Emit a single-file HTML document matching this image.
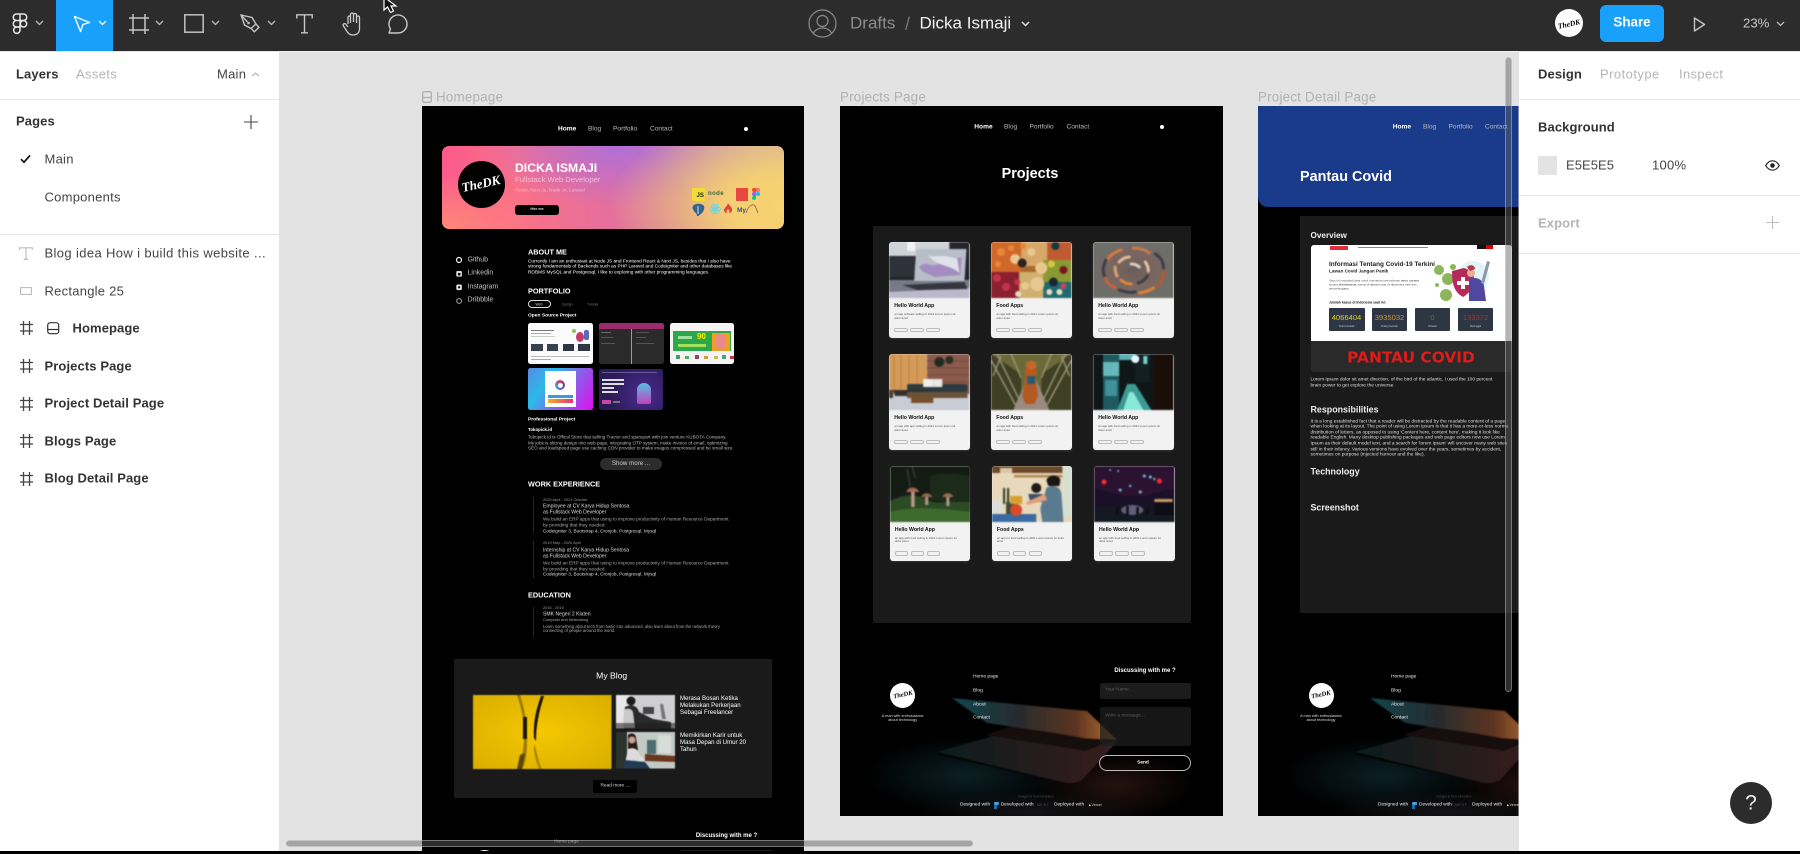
<!DOCTYPE html>
<html lang="en"><head><meta charset="utf-8"><title>Dicka Ismaji – Figma</title>
<style>
*{box-sizing:border-box}
html,body{margin:0;padding:0;width:1800px;height:854px;overflow:hidden;background:#000}
body{position:relative;font-family:"Liberation Sans",sans-serif}
.a{position:absolute}
.t{position:absolute;white-space:nowrap;line-height:1;transform:translateY(-50%)}
.b{font-weight:700}
.c{transform:translate(-50%,-50%)}
.f{position:absolute;left:0;top:0;width:1800px;height:854px;filter:blur(.3px)}
.f .t{margin-top:.8px}
.ft{margin-top:1.8px !important}
.ui{font-size:13px;color:#444;letter-spacing:.25px}
.ui.b{color:#333;letter-spacing:.1px}
svg{position:absolute;overflow:visible}
.w{color:#fff}
.card{position:absolute;width:80.5px;height:95.5px;background:#f2f2f2;border-radius:3px;overflow:hidden;box-shadow:0 1px 2px rgba(255,255,255,.12)}
.card svg{left:0;top:0;width:80.5px;height:56px;filter:blur(.7px)}
.card .h{position:absolute;left:5px;top:61.9px;font-size:5.2px;font-weight:700;color:#111;white-space:nowrap;line-height:1}
.card .d{position:absolute;left:5px;top:71px;font-size:2.9px;color:#555;line-height:3.5px;width:68px}
.card i{position:absolute;top:85.5px;width:13.5px;height:4.5px;border:.5px solid #bbb;border-radius:2px}
.nav span{position:absolute;font-size:6.6px;line-height:1;transform:translateY(-50%);margin-top:.8px;color:#bbb;white-space:nowrap}
.nav span.h{color:#fff;font-weight:700}
</style></head><body>

<!-- canvas -->
<div class="a" style="left:279px;top:52px;width:1240px;height:800px;background:#e3e3e3"></div>

<!-- frame labels -->
<svg style="left:422px;top:91px" width="10" height="12" viewBox="0 0 10 12"><rect x=".7" y=".7" width="8.6" height="10.6" rx="1.5" fill="none" stroke="#b0b0b0" stroke-width="1.3"/><path d="M1 6.5h8" stroke="#b0b0b0" stroke-width="1.3"/></svg>
<div class="t" style="left:436px;top:96.5px;font-size:13.4px;color:#b2b2b2;letter-spacing:.2px">Homepage</div>
<div class="t" style="left:840px;top:96.5px;font-size:13.4px;color:#b2b2b2;letter-spacing:.2px">Projects Page</div>
<div class="t" style="left:1258px;top:96.5px;font-size:13.4px;color:#b2b2b2;letter-spacing:.2px">Project Detail Page</div>

<!-- HOMEPAGE FRAME -->
<div class="f" style="clip-path:polygon(422px 105.5px,804px 105.5px,804px 852px,422px 852px)">
<div class="a" style="left:422px;top:105.5px;width:382px;height:750px;background:#000"></div>
<div class="nav">
<span class="h" style="left:558px;top:129px">Home</span><span style="left:588px;top:129px">Blog</span><span style="left:613px;top:129px">Portfolio</span><span style="left:650px;top:129px">Contact</span></div>
<div class="a" style="left:743.5px;top:126.5px;width:4px;height:4px;border-radius:50%;background:#fff"></div>

<!-- hero -->
<div class="a" style="left:442.3px;top:146px;width:342px;height:83px;border-radius:7px;background:
radial-gradient(ellipse 175px 95px at 100% 72%,#f7d26e 0%,#f5cf75 32%,rgba(245,207,117,0) 100%),
radial-gradient(ellipse 140px 62px at 52% 0%,#b06fd8 0%,rgba(176,111,216,0) 100%),
radial-gradient(ellipse 110px 60px at 92% 0%,#c8a8a8 0%,rgba(200,168,168,0) 100%),
radial-gradient(ellipse 100px 55px at 0% 100%,#ff8a78 0%,rgba(255,138,120,0) 100%),
linear-gradient(90deg,#fb5a8c 0%,#fa7088 22%,#e56f9e 50%,#d0789f 70%,#d89a90 100%)"></div>
<div class="a" style="left:457.5px;top:160.5px;width:47px;height:47px;border-radius:50%;background:#000"></div>
<div class="t w" style="left:481px;top:183.5px;font:italic 700 13px 'Liberation Serif',serif;transform:translate(-50%,-50%) rotate(-12deg)">TheDK</div>
<div class="t b w" style="left:515px;top:167.5px;font-size:12.2px">DICKA ISMAJI</div>
<div class="t" style="left:515px;top:179.5px;font-size:7.7px;color:rgba(255,255,255,.55)">Fullstack Web Developer</div>
<div class="t" style="left:515px;top:191.5px;font-size:4.8px;color:rgba(255,255,255,.5)">React, Next Js, Node Js, Laravel</div>
<div class="a" style="left:515px;top:205px;width:44px;height:10px;background:#000;border-radius:3px"></div>
<div class="t c" style="left:537px;top:209.5px;font-size:3.6px;color:#ddd;font-weight:700">Hire me</div>
<div class="a" style="left:691.5px;top:188px;width:13px;height:12.5px;background:#f1dc3c"></div>
<div class="t b" style="left:696.5px;top:195px;font-size:6px;color:#222">JS</div>
<div class="t b" style="left:708px;top:193.5px;font-size:6px;color:#3c6b3c;letter-spacing:.4px">node</div>
<div class="a" style="left:736px;top:188px;width:12px;height:12.5px;background:#e9483f"></div>
<svg style="left:752px;top:188px" width="8" height="12" viewBox="0 0 8 12"><circle cx="6" cy="6" r="2" fill="#1abcfe"/><path d="M2 0h2v4H2a2 2 0 010-4z" fill="#f24e1e"/><path d="M4 0h2a2 2 0 010 4H4z" fill="#ff7262"/><path d="M2 4h2v4H2a2 2 0 010-4z" fill="#a259ff"/><path d="M2 8h2v2a2 2 0 11-2-2z" fill="#0acf83"/></svg>
<svg style="left:692px;top:203px" width="13" height="13" viewBox="0 0 13 13"><path d="M1 3c2-3 9-3 11 0 1 3-1 6-2 7l-1 1c-2 1-2 1-2 2H5c0-3-2-3-3-5S0 5 1 3z" fill="#33668f"/><path d="M6 3v8" stroke="#cfe0ee" stroke-width="1"/></svg>
<svg style="left:709px;top:203px" width="12" height="12" viewBox="0 0 12 12" fill="none" stroke="#6fd6e0" stroke-width=".9"><ellipse cx="6" cy="6" rx="5.5" ry="2.2"/><ellipse cx="6" cy="6" rx="5.5" ry="2.2" transform="rotate(60 6 6)"/><ellipse cx="6" cy="6" rx="5.5" ry="2.2" transform="rotate(120 6 6)"/><circle cx="6" cy="6" r="1.1" fill="#6fd6e0"/></svg>
<svg style="left:723px;top:203px" width="10" height="12" viewBox="0 0 10 12"><path d="M5 0c1 3 5 4 4 8-1 2-3 2-3 2 1-2 0-3-1-4-1 1-2 2-1 4 0 0-3 0-3-3C1 5 4 4 5 0z" fill="#e0453a"/></svg>
<div class="t b" style="left:737px;top:210px;font-size:6.5px;color:#33557a">My</div>
<svg style="left:745px;top:203px" width="14" height="12" viewBox="0 0 14 12"><path d="M1 10C3 4 6 1 9 2c2 1 2 4 4 8" fill="none" stroke="#7a6a50" stroke-width=".8"/></svg>

<!-- sidebar -->
<svg style="left:456px;top:256.5px" width="7" height="50" viewBox="0 0 7 50"><circle cx="3" cy="3" r="2.5" fill="none" stroke="#eee" stroke-width="1.2"/><rect x=".3" y="14" width="5.6" height="5.6" rx="1" fill="#ddd"/><rect x="2" y="16" width="2.4" height="2.4" fill="#000"/><rect x=".3" y="27.5" width="5.6" height="5.6" rx="1.3" fill="#ddd"/><circle cx="3.1" cy="30.3" r="1.1" fill="#000"/><circle cx="3.1" cy="44" r="2.4" fill="none" stroke="#aaa" stroke-width="1"/></svg>
<div class="t" style="left:467.6px;top:259.8px;font-size:6.9px;color:#c4c4c4">Github</div>
<div class="t" style="left:467.6px;top:273.5px;font-size:6.9px;color:#c4c4c4">Linkedin</div>
<div class="t" style="left:467.6px;top:287px;font-size:6.9px;color:#c4c4c4">Instagram</div>
<div class="t" style="left:467.6px;top:300.6px;font-size:6.9px;color:#c4c4c4">Dribbble</div>

<!-- about -->
<div class="t b w" style="left:528px;top:251px;font-size:7.3px">ABOUT ME</div>
<div class="t w" style="left:528px;top:262px;font-size:4.75px">Currently I am an enthusiast at Node JS and Frontend React &amp; Next JS, besides that I also have</div>
<div class="t w" style="left:528px;top:267.5px;font-size:4.75px">strong fundamentals of Backends such as PHP Laravel and Codeigniter and other databases like</div>
<div class="t w" style="left:528px;top:273px;font-size:4.75px">RDBMS MySQL and Postgresql. I like to exploring with other programming languages.</div>
<div class="t b w" style="left:528px;top:290.5px;font-size:7.3px">PORTFOLIO</div>
<div class="a" style="left:527.5px;top:300px;width:23.5px;height:8px;border:.7px solid #ddd;border-radius:4px"></div>
<div class="t c" style="left:539px;top:304px;font-size:3.4px;color:#ddd">Web</div>
<div class="t" style="left:562px;top:304px;font-size:3.4px;color:#777">Design</div>
<div class="t" style="left:587px;top:304px;font-size:3.4px;color:#777">Tutorial</div>
<div class="t b w" style="left:528px;top:316.5px;font-size:4.9px">Open Source Project</div>

<!-- thumbs -->
<div class="a" style="left:528px;top:322.5px;width:65px;height:41.5px;background:#fbfbfb;border-radius:2.5px;overflow:hidden">
 <div class="a" style="left:3px;top:7px;width:23px;height:1.6px;background:#777"></div><div class="a" style="left:3px;top:10px;width:20px;height:1.4px;background:#aaa"></div><div class="a" style="left:3px;top:13px;width:24px;height:1px;background:#ccc"></div>
 <div class="a" style="left:44px;top:6px;width:4px;height:4px;border-radius:50%;background:#8ec05a"></div><div class="a" style="left:48px;top:9px;width:8px;height:10px;border-radius:50%;background:#c83a6c"></div><div class="a" style="left:56px;top:7px;width:5px;height:10px;background:#5a6ab8;border-radius:2px"></div>
 <div class="a" style="left:3px;top:21px;width:12px;height:7px;background:#38424e"></div><div class="a" style="left:18.5px;top:21px;width:11px;height:7px;background:#38424e"></div><div class="a" style="left:35px;top:21px;width:11px;height:7px;background:#2d3642"></div><div class="a" style="left:50px;top:21px;width:12px;height:7px;background:#2d3642"></div>
 <div class="a" style="left:3px;top:33px;width:58px;height:.8px;background:#bbb"></div><div class="a" style="left:3px;top:36px;width:20px;height:.8px;background:#aaa"></div>
</div>
<div class="a" style="left:598.5px;top:322.5px;width:65px;height:41.5px;background:#2a2a2a;border-radius:2.5px;overflow:hidden">
 <div class="a" style="left:0;top:0;width:65px;height:6.5px;background:#9d2c6f"></div>
 <div class="a" style="left:32px;top:6px;width:1px;height:36px;background:#9a9a9a"></div>
 <div class="a" style="left:2px;top:9px;width:10px;height:.8px;background:#666"></div><div class="a" style="left:2px;top:14px;width:12px;height:.8px;background:#555"></div><div class="a" style="left:2px;top:20px;width:14px;height:.8px;background:#555"></div>
 <div class="a" style="left:37px;top:9px;width:13px;height:.8px;background:#555"></div><div class="a" style="left:37px;top:14px;width:10px;height:.8px;background:#555"></div><div class="a" style="left:37px;top:20px;width:18px;height:.8px;background:#555"></div>
</div>
<div class="a" style="left:670px;top:322.5px;width:64px;height:41.5px;background:#f4f4f4;border-radius:2.5px;overflow:hidden">
 <div class="a" style="left:3px;top:8.5px;width:58px;height:20px;background:#2aa84a"></div>
 <div class="a" style="left:42px;top:10px;width:18px;height:18px;background:#f0a020"></div>
 <div class="a" style="left:46px;top:11px;width:9px;height:15px;background:#e88a8a;border-radius:3px"></div>
 <div class="t b" style="left:27px;font-size:8px;color:#fff000;transform:none;top:10.5px;margin-top:0">90</div>
 <div class="a" style="left:8px;top:13px;width:14px;height:3px;background:#9ee0a0"></div>
 <div class="a" style="left:8px;top:21px;width:28px;height:3px;background:#a4e060"></div>
 <div class="a" style="left:6px;top:32px;width:4px;height:4px;background:#4a9a6a"></div><div class="a" style="left:15px;top:33px;width:4px;height:3px;background:#5aaa5a"></div><div class="a" style="left:25px;top:32px;width:4px;height:4px;background:#a04060"></div><div class="a" style="left:34px;top:33px;width:4px;height:3px;background:#d0a040"></div><div class="a" style="left:44px;top:33px;width:4px;height:3px;background:#c0c060"></div><div class="a" style="left:52px;top:32px;width:4px;height:4px;background:#50a080"></div><div class="a" style="left:60px;top:33px;width:4px;height:3px;background:#d03050"></div>
</div>
<div class="a" style="left:528px;top:368.3px;width:64.5px;height:41.4px;border-radius:2.5px;overflow:hidden;background:linear-gradient(125deg,#5a8ae8 0%,#2bbae8 30%,#8a5ee8 60%,#e010f0 100%)">
 <div class="a" style="left:16.5px;top:3px;width:31.5px;height:36px;background:#fff"></div>
 <div class="a" style="left:27px;top:12px;width:10px;height:10px;border-radius:50%;background:conic-gradient(#d04060,#5040c0,#40a0e0,#d04060)"></div>
 <div class="a" style="left:29.5px;top:14.5px;width:5px;height:5px;border-radius:50%;background:#fff"></div>
 <div class="a" style="left:20px;top:27px;width:24.5px;height:3px;background:#3a9ae0"></div>
 <div class="a" style="left:20px;top:31px;width:24.5px;height:3.5px;background:linear-gradient(90deg,#f0b020,#e83080)"></div>
</div>
<div class="a" style="left:599px;top:369px;width:64px;height:40.5px;border-radius:2.5px;overflow:hidden;background:radial-gradient(circle at 45px 25px,#4a2a90,#2a1a55 70%)">
 <div class="a" style="left:3px;top:10px;width:22px;height:1.6px;background:#ddd"></div><div class="a" style="left:3px;top:14px;width:22px;height:1.6px;background:#ddd"></div><div class="a" style="left:3px;top:18px;width:12px;height:1.6px;background:#ddd"></div><div class="a" style="left:3px;top:22px;width:16px;height:1.6px;background:#ddd"></div>
 <div class="a" style="left:3px;top:31px;width:9px;height:4px;background:#c848a8"></div><div class="a" style="left:14px;top:32px;width:7px;height:2px;background:#777"></div>
 <div class="a" style="left:38px;top:14px;width:14px;height:21px;background:linear-gradient(#5ac0e0,#c040c0);border-radius:7px 7px 2px 2px"></div>
 <div class="a" style="left:3px;top:2.5px;width:55px;height:1px;background:#6a5a9a"></div>
</div>

<div class="t b w" style="left:528px;top:420.7px;font-size:4.9px">Professional Project</div>
<div class="t b w" style="left:528px;top:429.5px;font-size:4.4px">Tokopick.id</div>
<div class="t" style="left:528px;top:437.5px;font-size:4.6px;color:#bbb">Tokopick.Id is Offical Store that selling Tractor and sparepart with join venture KUBOTA Company.</div>
<div class="t" style="left:528px;top:443px;font-size:4.6px;color:#bbb">My jobs is slicing design into web page, integrating OTP system, make invoice of email, optimizing</div>
<div class="t" style="left:528px;top:448.7px;font-size:4.6px;color:#bbb">SEO and loadspeed page use caching CDN provider to make images compressed and be small size.</div>
<div class="a" style="left:600px;top:457.5px;width:62px;height:12px;background:#2c2c2c;border-radius:6px"></div>
<div class="t c" style="left:631px;top:463px;font-size:6.2px;color:#ccc">Show more ...</div>

<div class="t b w" style="left:528px;top:483.2px;font-size:7.3px">WORK EXPERIENCE</div>
<div class="a" style="left:532.5px;top:497px;width:1px;height:36px;background:#5c1015"></div>
<div class="a" style="left:532.5px;top:541px;width:1px;height:37px;background:#5c1015"></div>
<div class="t" style="left:543px;top:499px;font-size:3.9px;color:#999">2020 April - 2021 October</div>
<div class="t" style="left:543px;top:506.3px;font-size:5.1px;color:#ddd">Employee at CV Karya Hidup Sentosa</div>
<div class="t" style="left:543px;top:512.7px;font-size:5.1px;color:#ddd">as Fullstack Web Developer</div>
<div class="t" style="left:543px;top:519.7px;font-size:4.7px;color:#aaa">We build an ERP apps  that using to improve productivity of Human Resource Department</div>
<div class="t" style="left:543px;top:525.3px;font-size:4.7px;color:#aaa">by providing that they needed.</div>
<div class="t" style="left:543px;top:531px;font-size:4.7px;color:#ddd">Codeigniter 3, Bootstrap 4, Cronjob, Postgresql, Mysql</div>
<div class="t" style="left:543px;top:542.7px;font-size:3.9px;color:#999">2019 May - 2020 April</div>
<div class="t" style="left:543px;top:550px;font-size:5.1px;color:#ddd">Internship at CV Karya Hidup Sentosa</div>
<div class="t" style="left:543px;top:556.3px;font-size:5.1px;color:#ddd">as Fullstack Web Developer</div>
<div class="t" style="left:543px;top:563px;font-size:4.7px;color:#aaa">We build an ERP apps  that using to improve productivity of Human Resource Department</div>
<div class="t" style="left:543px;top:569px;font-size:4.7px;color:#aaa">by providing that they needed.</div>
<div class="t" style="left:543px;top:574.7px;font-size:4.7px;color:#ddd">Codeigniter 3, Bootstrap 4, Cronjob, Postgresql, Mysql</div>

<div class="t b w" style="left:528px;top:594.2px;font-size:7.3px">EDUCATION</div>
<div class="a" style="left:532.5px;top:607px;width:1px;height:30px;background:#5c1015"></div>
<div class="t" style="left:543px;top:607.7px;font-size:3.9px;color:#999">2016 - 2019</div>
<div class="t" style="left:543px;top:614px;font-size:5.1px;color:#ddd">SMK Negeri 2 Klaten</div>
<div class="t" style="left:543px;top:619px;font-size:3.9px;color:#aaa">Computer and Networking</div>
<div class="t" style="left:543px;top:626px;font-size:4.2px;color:#aaa">Learn something about tech from basic into advanced, also learn about  from the network theory</div>
<div class="t" style="left:543px;top:630.7px;font-size:4.2px;color:#aaa">connecting of people around the world.</div>

<!-- blog -->
<div class="a" style="left:454.3px;top:658.7px;width:317.4px;height:139.3px;background:#1a1a1a;border-radius:1px"></div>
<div class="t c w" style="left:611.7px;top:675px;font-size:8.6px">My Blog</div>
<svg style="left:472.5px;top:695px;filter:blur(.4px)" width="138.5" height="74" viewBox="0 0 138.5 74"><defs><radialGradient id="y" cx=".5" cy=".5" r=".7"><stop offset="0" stop-color="#f5c800"/><stop offset="1" stop-color="#d9ae00"/></radialGradient></defs><rect width="138.5" height="74" fill="url(#y)"/><path d="M44 0c5 14 8 30 7 46-1 12-3 22-6 28h4c5-8 5-20 5-32 0-16-3-30-7-42z" fill="#9a7a00"/><path d="M50 22l4 0 0 22-4 0z" fill="#1a1405"/><path d="M68 1c-5 14-8 26-7 42l2 3c0-15 3-30 8-45z" fill="#1a1405"/><path d="M47 60l5-2-3 16h-5z" fill="#5a4500"/><path d="M62 50c2 8 3 16 7 24h-3c-3-8-5-14-5-22z" fill="#a88600"/></svg>
<svg style="left:616px;top:694.7px;filter:blur(.5px)" width="59" height="33.5" viewBox="0 0 59 33.5"><rect width="59" height="33.5" fill="#cfcfd2"/><rect x="0" y="0" width="14" height="33.5" fill="#e8e8e8"/><circle cx="15" cy="6" r="4.5" fill="#1c1c1c"/><path d="M9 12c6-3 12-2 14 5l14 7 18 3v6.5H8z" fill="#2a2a2a"/><path d="M8 15c3-2 7-2 9 2l2 16H7z" fill="#c8c8c8"/><rect x="27" y="12" width="11" height="7" fill="#454548"/><path d="M44 9l3 0 3 15-4 0z" fill="#777"/><path d="M0 28h59v5.5H0z" fill="#1b1b1b" opacity=".55"/></svg>
<svg style="left:616px;top:732px;filter:blur(.5px)" width="59" height="36.5" viewBox="0 0 59 36.5"><rect width="59" height="36.5" fill="#c3c9c4"/><rect x="0" y="0" width="11" height="36.5" fill="#2a332e"/><rect x="31" y="8" width="9" height="14" fill="#4d6e70"/><rect x="42" y="3" width="13" height="18" fill="#d8dcd8"/><path d="M29 22l30 2v6l-30-1z" fill="#6a3620"/><path d="M12 3c4-3 8-1 8 3l2 12c-3 4-7 4-10 0z" fill="#2a1b18"/><circle cx="16" cy="8" r="3.5" fill="#caa08a"/><path d="M12 17c6-2 10 0 12 6l5 5 -4 2-8-3-5 9H8z" fill="#dcdcda"/><path d="M9 28l20 2 5 6.5H8z" fill="#223a52"/></svg>
<div class="t w" style="left:680px;top:698.5px;font-size:6.1px">Merasa Bosan Ketika</div>
<div class="t w" style="left:680px;top:705.5px;font-size:6.1px">Melakukan Perkerjaan</div>
<div class="t w" style="left:680px;top:712.5px;font-size:6.1px">Sebagai Freelancer</div>
<div class="t w" style="left:680px;top:735.5px;font-size:6.1px">Memikirkan Karir untuk</div>
<div class="t w" style="left:680px;top:742.5px;font-size:6.1px">Masa Depan di Umur 20</div>
<div class="t w" style="left:680px;top:749.5px;font-size:6.1px">Tahun</div>
<div class="a" style="left:592.7px;top:780px;width:44.3px;height:13px;background:#000;border-radius:2px"></div>
<div class="t c" style="left:615px;top:786px;font-size:4.8px;color:#ddd">Read more ...</div>

<!-- footer piece -->
<div class="t c b w" style="left:726.5px;top:835.5px;font-size:6px">Discussing with me ?</div>
<div class="t" style="left:554px;top:842.5px;font-size:4.8px;color:#ccc">Home page</div>
<div class="a" style="left:472px;top:849.5px;width:25px;height:25px;border-radius:50%;background:#fff"></div>
<div class="a" style="left:681px;top:849.5px;width:91px;height:16px;background:#1c1c1c"></div>
</div>

<!-- PROJECTS FRAME -->
<div class="f" style="clip-path:polygon(840px 105.5px,1223px 105.5px,1223px 816px,840px 816px)">
<div class="a" style="left:840px;top:105.5px;width:383px;height:711px;background:#000"></div>
<div class="nav"><span class="h" style="left:974.3px;top:127.5px">Home</span><span style="left:1004px;top:127.5px">Blog</span><span style="left:1029.5px;top:127.5px">Portfolio</span><span style="left:1066.5px;top:127.5px">Contact</span></div>
<div class="a" style="left:1160px;top:125px;width:4px;height:4px;border-radius:50%;background:#fff"></div>
<div class="t c b w" style="left:1030px;top:173px;font-size:14.4px">Projects</div>
<div class="a" style="left:872.7px;top:225.7px;width:318px;height:397px;background:#1a1a1a;border-radius:1px"></div>

<!-- cards -->
<div class="card" style="left:889.3px;top:242.3px"><svg viewBox="0 0 80 56" preserveAspectRatio="none"><rect width="80" height="56" fill="#23242c"/><rect x="0" y="0" width="60" height="14" fill="#cfd2d6"/><rect x="18" y="0" width="8" height="9" fill="#f2f2f4"/><rect x="0" y="15" width="26" height="20" fill="#2f3138"/><path d="M0 38h80v18H0z" fill="#777a88"/><path d="M0 50l80-4v10H0z" fill="#bcb8cc"/><path d="M27 7l50 0-2 32H25z" fill="#b8bec8"/><path d="M30 25c8-8 14 4 22-6 6-6 12 0 20-4l-1 18-26 2c-6-4-10-2-15-10z" fill="#a58cc0"/><path d="M38 13c10 4 12-2 30 4l2 14c-12-10-18-4-32-18z" fill="#dfe3e8"/><path d="M13 43l62-3 3 7-50 1z" fill="#33353c"/></svg><div class="h">Hello World App</div><div class="d">an app software selling in 2021 Lorem ipsum sit dolor amet</div><i style="left:5px"></i><i style="left:21px"></i><i style="left:37px"></i></div>

<div class="card" style="left:991.3px;top:242.3px"><svg viewBox="0 0 80 56" preserveAspectRatio="none"><rect width="80" height="56" fill="#a96a30"/><rect x="0" y="0" width="30" height="30" fill="#d0682a"/><rect x="30" y="0" width="26" height="24" fill="#d8a868"/><rect x="56" y="0" width="24" height="18" fill="#c05a30"/><rect x="0" y="30" width="28" height="26" fill="#8a2030"/><rect x="28" y="30" width="24" height="26" fill="#d0b070"/><rect x="52" y="18" width="28" height="22" fill="#8a9a30"/><rect x="52" y="40" width="28" height="16" fill="#1f6a70"/><g fill="#e8883a"><circle cx="10" cy="10" r="4"/><circle cx="20" cy="6" r="3"/><circle cx="7" cy="22" r="3"/><circle cx="32" cy="4" r="3"/></g><g fill="#e8c890"><circle cx="40" cy="10" r="4"/><circle cx="24" cy="17" r="5"/><circle cx="50" cy="26" r="6"/><circle cx="46" cy="42" r="7"/><circle cx="34" cy="44" r="4"/></g><circle cx="31" cy="21" r="4.5" fill="#2a2420"/><circle cx="64" cy="4" r="4" fill="#123a40"/><circle cx="72" cy="28" r="4" fill="#7a1525"/><circle cx="62" cy="40" r="4.5" fill="#1c2430"/><g fill="#c0344a"><circle cx="6" cy="36" r="4"/><circle cx="15" cy="45" r="4"/><circle cx="26" cy="40" r="3"/></g><g fill="#e8dcc0"><circle cx="68" cy="50" r="3"/><circle cx="27" cy="52" r="3"/><circle cx="58" cy="50" r="3"/></g><circle cx="72" cy="44" r="3" fill="#d04060"/><circle cx="60" cy="22" r="3.5" fill="#d8c840"/></svg><div class="h">Food Apps</div><div class="d">an app with food selling in 2021 Lorem ipsum sit dolor amet</div><i style="left:5px"></i><i style="left:21px"></i><i style="left:37px"></i></div>

<div class="card" style="left:1093.3px;top:242.3px"><svg viewBox="0 0 80 56" preserveAspectRatio="none"><defs><radialGradient id="sw"><stop offset="0" stop-color="#6a5e58"/><stop offset=".6" stop-color="#7a6660"/><stop offset="1" stop-color="#6d6d6a"/></radialGradient></defs><rect width="80" height="56" fill="url(#sw)"/><g fill="none" stroke-width="3" stroke-linecap="round"><path d="M14 18c4-6 8-8 14-10" stroke="#d87a3a"/><path d="M12 36c-3-8-2-12 1-18" stroke="#3a3f48"/><path d="M22 46c-5-3-8-5-10-10" stroke="#c0663a"/><path d="M42 50c-6 1-10 0-16-2" stroke="#3a3f48"/><path d="M60 46c-4 3-8 4-14 5" stroke="#e08030"/><path d="M70 30c0 6-2 10-6 14" stroke="#b05a30"/><path d="M62 12c5 3 8 8 8 14" stroke="#3a3f48"/><path d="M40 6c6 0 12 2 16 5" stroke="#c87a4a"/><path d="M26 20c3-3 6-5 10-5" stroke="#e8b890"/><path d="M24 34c-2-3-2-6-2-9" stroke="#d8a070"/><path d="M38 42c-4 0-7-1-10-4" stroke="#e08a3a"/><path d="M54 34c-2 3-5 6-9 7" stroke="#3a3f48"/><path d="M52 20c2 3 3 6 3 9" stroke="#e8c0a0"/><path d="M38 22c3 0 6 1 8 3" stroke="#d8d0c8"/></g></svg><div class="h">Hello World App</div><div class="d">an app with food selling in 2021 Lorem ipsum sit dolor amet</div><i style="left:5px"></i><i style="left:21px"></i><i style="left:37px"></i></div>

<div class="card" style="left:889.3px;top:354px"><svg viewBox="0 0 80 56" preserveAspectRatio="none"><rect width="80" height="56" fill="#c8ccd4"/><rect width="38" height="40" fill="#d49a58"/><path d="M5 0v40M12 0v40M20 0v40M28 0v40" stroke="#b57a3e" stroke-width=".7"/><rect x="38" width="42" height="40" fill="#8a5a4c"/><path d="M38 7h42M38 14h42M38 21h42M38 28h42" stroke="#6d4438" stroke-width=".7"/><circle cx="50" cy="8" r="5" fill="#232a20"/><circle cx="60" cy="6" r="4" fill="#2a3020"/><rect x="18" y="30" width="60" height="8" rx="2" fill="#2c3a40"/><rect x="34" y="25" width="10" height="8" fill="#f0f0ee"/><rect x="44" y="25" width="9" height="8" fill="#e8e8e4"/><path d="M4 36h34l2 6H6z" fill="#33302c"/><path d="M18 38h60v6H18z" fill="#6a5238"/><rect x="22" y="44" width="22" height="5" fill="#7a4e2c"/><rect x="0" y="36" width="4" height="8" fill="#4a3a30"/></svg><div class="h">Hello World App</div><div class="d">an app with app selling in 2021 Lorem ipsum sit dolor amet</div><i style="left:5px"></i><i style="left:21px"></i><i style="left:37px"></i></div>

<div class="card" style="left:991.3px;top:354px"><svg viewBox="0 0 80 56" preserveAspectRatio="none"><rect width="80" height="56" fill="#6a6a38"/><path d="M0 0l30 20v36H0zM80 0L50 20v36h30z" fill="#3e3f24"/><path d="M0 6l26 48M6 0l26 54M80 6L54 54M74 0L48 54M20 0l10 24M60 0L50 24M10 2l-8 20M70 2l8 20" stroke="#9c9878" stroke-width="1.4"/><path d="M22 56l14-32h8l14 32z" fill="#9a8a80"/><path d="M36 24h8l2-16h-12z" fill="#7c7a40"/><path d="M34 12c4-2 8-2 10 0l2 6-2 6 3 18-4 8H34l-3-8 3-18z" fill="#b25a22"/><rect x="36" y="22" width="8" height="8" fill="#2a5a70"/><circle cx="40" cy="11" r="4.5" fill="#c9662a"/></svg><div class="h">Food Apps</div><div class="d">an app with food selling in 2021 Lorem ipsum sit dolor amet</div><i style="left:5px"></i><i style="left:21px"></i><i style="left:37px"></i></div>

<div class="card" style="left:1093.3px;top:354px"><svg viewBox="0 0 80 56" preserveAspectRatio="none"><rect width="80" height="56" fill="#0f1616"/><path d="M10 0h16v56H10z" fill="#1e5a60"/><path d="M10 8h16v14H10z" fill="#67b8bc"/><path d="M12 26h12v16H12z" fill="#3f9098"/><path d="M26 0h30v6H26z" fill="#5fb0b4"/><path d="M24 56l10-26h8l16 26z" fill="#3c9a94"/><path d="M30 56l6-18h4l10 18z" fill="#8ae8d8"/><path d="M42 0h14v28H42z" fill="#122022"/><path d="M60 0h20v56H60z" fill="#1a0f08"/><circle cx="42" cy="5" r="4" fill="#e4fafa"/><rect x="50" y="2" width="4" height="8" fill="#7ad0d0"/></svg><div class="h">Hello World App</div><div class="d">an app with food selling in 2021 Lorem ipsum sit dolor amet</div><i style="left:5px"></i><i style="left:21px"></i><i style="left:37px"></i></div>

<div class="card" style="left:889.9px;top:465.7px"><svg viewBox="0 0 80 56" preserveAspectRatio="none"><rect width="80" height="56" fill="#141a14"/><path d="M0 35c20-10 30-5 40 0s30-4 40-2v23H0z" fill="#2c4a24"/><path d="M40 10c10-4 30-2 40 0v26c-16 0-30 0-40-2z" fill="#1c2a1a"/><path d="M0 46c20-6 50-4 80 0v10H0z" fill="#3e6a2e"/><rect x="21" y="26" width="3.5" height="15" fill="#b89a8a"/><path d="M16 26c3-6 10-6 13 0z" fill="#a86a50"/><rect x="35" y="30" width="3" height="9" fill="#b0988a"/><path d="M31 31c2-5 9-5 11 0z" fill="#9a6248"/><rect x="56" y="30" width="3" height="10" fill="#b0988a"/><path d="M52 31c2-5 9-5 11 0z" fill="#a06a4c"/><path d="M17 3l3 18M22 0l3 12" stroke="#4a4a3e" stroke-width="1"/></svg><div class="h">Hello World App</div><div class="d">an app with food selling in 2021 Lorem ipsum sit dolor amet</div><i style="left:5px"></i><i style="left:21px"></i><i style="left:37px"></i></div>

<div class="card" style="left:991.9px;top:465.7px"><svg viewBox="0 0 80 56" preserveAspectRatio="none"><rect width="80" height="56" fill="#e8d8bc"/><rect width="70" height="7" fill="#6a4a2a"/><rect x="8" y="2" width="12" height="5" fill="#d8c8a8"/><rect x="22" y="9" width="48" height="2.5" fill="#b08a50"/><rect x="70" width="10" height="50" fill="#d8e0d4"/><rect x="0" y="48" width="44" height="8" fill="#3a6aa0"/><rect x="0" y="34" width="10" height="14" fill="#dcdcd8"/><rect x="11" y="22" width="2" height="16" fill="#2a3a20"/><rect x="15" y="22" width="2" height="16" fill="#2a3a20"/><rect x="14" y="36" width="8" height="12" fill="#3a4a3a"/><circle cx="44" cy="22" r="5" fill="#1f1a18"/><path d="M36 28l14 0 3 8H38z" fill="#38506a"/><rect x="18" y="30" width="12" height="8" fill="#d8a030"/><circle cx="24" cy="44" r="6" fill="#d84a2a"/><path d="M54 14c3-6 12-6 14 0l-1 6H56z" fill="#1a1614"/><path d="M54 22c6-4 14-2 15 6l2 28H50l-2-14c2-6 4-12 6-20z" fill="#5a7a90"/><path d="M52 28l-18 8 1 3 20-5z" fill="#e0a078"/></svg><div class="h">Food Apps</div><div class="d">an app for food selling in 2021 Lorem ipsum sit dolor amet</div><i style="left:5px"></i><i style="left:21px"></i><i style="left:37px"></i></div>

<div class="card" style="left:1094px;top:465.7px"><svg viewBox="0 0 80 56" preserveAspectRatio="none"><rect width="80" height="56" fill="#1a1028"/><path d="M0 0h80v22L50 30 30 30 0 22z" fill="#2a1230"/><rect x="0" y="40" width="80" height="16" fill="#141820"/><ellipse cx="38" cy="44" rx="11" ry="5" fill="#9890b8" opacity=".6"/><g fill="#ff2a2a"><circle cx="10" cy="16" r="2.5"/><circle cx="65" cy="15" r="2.5"/></g><g fill="#7ab8e0"><circle cx="26" cy="24" r="1.5"/><circle cx="50" cy="10" r="1.5"/><circle cx="56" cy="11" r="1.5"/><circle cx="60" cy="13" r="1.2"/><circle cx="36" cy="20" r="1.2"/><circle cx="46" cy="26" r="1.5"/><circle cx="16" cy="4" r="1"/><circle cx="24" cy="5" r="1"/></g><g fill="#0d0d14"><rect x="22" y="40" width="2.5" height="9"/><rect x="32" y="40" width="2.5" height="10"/><rect x="42" y="41" width="2.5" height="9"/><rect x="52" y="41" width="2.5" height="8"/><rect x="60" y="37" width="20" height="12"/></g><rect x="60" y="33" width="18" height="3" fill="#c89a60"/></svg><div class="h">Hello World App</div><div class="d">an app with food selling in 2021 Lorem ipsum sit dolor amet</div><i style="left:5px"></i><i style="left:21px"></i><i style="left:37px"></i></div>

<!-- footer projects -->
<svg style="left:0;top:0" width="1800" height="854" viewBox="0 0 1800 854"><defs>
<radialGradient id="g1"><stop offset="0" stop-color="#0b1f24"/><stop offset="1" stop-color="#0b1f24" stop-opacity="0"/></radialGradient>
<radialGradient id="g2"><stop offset="0" stop-color="#251210"/><stop offset="1" stop-color="#251210" stop-opacity="0"/></radialGradient>
<radialGradient id="g3"><stop offset="0" stop-color="#141416"/><stop offset="1" stop-color="#141416" stop-opacity="0"/></radialGradient>
<linearGradient id="lid" x1="0" y1="0" x2="1" y2="0"><stop offset="0" stop-color="#0f4650"/><stop offset=".4" stop-color="#262b2e"/><stop offset=".75" stop-color="#5c3420"/><stop offset="1" stop-color="#b87030"/></linearGradient>
<linearGradient id="base" x1="0" y1="0" x2="1" y2="0"><stop offset="0" stop-color="#0a1a1f"/><stop offset=".5" stop-color="#221a1c"/><stop offset="1" stop-color="#382020"/></linearGradient>
<filter id="bl"><feGaussianBlur stdDeviation=".8"/></filter>
<g id="lap"><ellipse cx="965" cy="775" rx="100" ry="38" fill="url(#g1)"/><ellipse cx="1115" cy="785" rx="80" ry="34" fill="url(#g2)"/><ellipse cx="1030" cy="812" rx="120" ry="22" fill="url(#g3)"/>
<g filter="url(#bl)"><path d="M937 752l60-17 120 7-37 40c-6 2-12 2-18 0z" fill="url(#base)"/><path d="M985 735l30-10 85 14 6 4-20 8z" fill="#170c0c"/><path d="M937 752l125 30c6 2 12 2 18 0l4-2c-8 3-15 4-22 2l-123-27z" fill="#000"/><path d="M952 698l135 13 30 29-33-2-28-5-28-4-41-6z" fill="url(#lid)"/></g></g>
</defs><use href="#lap"/></svg>
<div class="t ft" style="left:973px;top:676.7px;font-size:4.9px;color:#eee">Home page</div>
<div class="t ft" style="left:973px;top:690.3px;font-size:4.9px;color:#eee">Blog</div>
<div class="t ft" style="left:973px;top:704px;font-size:4.9px;color:#eee">About</div>
<div class="t ft" style="left:973px;top:717.7px;font-size:4.9px;color:#eee">Contact</div>
<div class="a" style="left:890px;top:682.5px;width:25px;height:25px;border-radius:50%;background:#fff"></div>
<div class="t" style="left:902.7px;top:694.5px;font:italic 700 6.5px 'Liberation Serif',serif;color:#000;transform:translate(-50%,-50%) rotate(-12deg)">TheDK</div>
<div class="t c" style="left:902.7px;top:716px;font-size:3.8px;color:#ddd">A man with enthusiasmic</div>
<div class="t c" style="left:902.7px;top:720.5px;font-size:3.8px;color:#ddd">about technology</div>
<div class="t c b w ft" style="left:1145px;top:669.7px;font-size:6px">Discussing with me ?</div>
<div class="a" style="left:1099.5px;top:682.7px;width:91px;height:16px;background:#1c1c1c;border-radius:2px"></div>
<div class="t" style="left:1105px;top:690.5px;font-size:4.8px;color:#5a5a5a">Your Name ...</div>
<div class="a" style="left:1099.5px;top:707.3px;width:91px;height:39px;background:rgba(30,30,30,.75);border-radius:2px"></div>
<div class="t" style="left:1105px;top:716.5px;font-size:4.8px;color:#5a5a5a">Write a message...</div>
<div class="a" style="left:1099px;top:754.7px;width:91.7px;height:16.5px;border:.8px solid #bbb;border-radius:8px"></div>
<div class="t c b w ft" style="left:1143px;top:762.5px;font-size:4.8px">Send</div>
<div class="t c" style="left:1036px;top:796px;font-size:3.2px;color:#4a4a4a">Images is from Unsplash</div>
<div class="t ft" style="left:960px;top:804px;font-size:4.8px;color:#eee">Designed with</div>
<svg style="left:993.5px;top:801.5px" width="5" height="7" viewBox="0 0 5 7"><rect width="5" height="3" fill="#3aa0e8" rx="1"/><rect y="3" width="3" height="4" fill="#1a6ab0"/></svg>
<div class="t ft" style="left:1000.7px;top:804px;font-size:4.8px;color:#eee">Developed with</div>
<div class="t ft" style="left:1037px;top:804px;font-size:3.6px;color:#555;letter-spacing:.8px">NEXT</div>
<div class="t ft" style="left:1054px;top:804px;font-size:4.8px;color:#eee">Deployed with</div>
<div class="t ft" style="left:1088px;top:804px;font-size:3.6px;color:#ddd">▲Vercel</div>
</div>

<!-- PROJECT DETAIL FRAME -->
<div class="f" style="clip-path:polygon(1258px 105.5px,1518.5px 105.5px,1518.5px 816px,1258px 816px)">
<div class="a" style="left:1258px;top:105.5px;width:262px;height:711px;background:#000"></div>
<div class="a" style="left:1258px;top:105.5px;width:262px;height:101.5px;background:#1a3a8a;border-bottom-left-radius:10px"></div>
<div class="nav"><span class="h" style="left:1392.7px;top:127.5px">Home</span><span style="left:1423px;top:127.5px">Blog</span><span style="left:1448.5px;top:127.5px">Portfolio</span><span style="left:1485px;top:127.5px">Contact</span></div>
<div class="t b w" style="left:1300px;top:176.5px;font-size:14.4px">Pantau Covid</div>
<div class="a" style="left:1300px;top:216px;width:220px;height:396.7px;background:#1a1a1a"></div>
<div class="t b" style="left:1310.5px;top:235px;font-size:8.2px;color:#eee">Overview</div>
<!-- screenshot -->
<div class="a" style="left:1310.5px;top:245px;width:201.5px;height:127px;background:#2a2a2a;border-radius:3px;overflow:hidden">
 <div class="a" style="left:0;top:0;width:201.5px;height:95.5px;background:#fff"></div>
 <div class="a" style="left:19px;top:1px;width:18px;height:4px;background:#e03040"></div>
 <div class="a" style="left:47px;top:2px;width:70px;height:1px;background:#888"></div>
 <div class="a" style="left:166px;top:0;width:16px;height:4px;background:#111"></div><div class="a" style="left:175px;top:0;width:7px;height:4px;background:#d00"></div>
 <div class="t b" style="left:18.5px;top:19px;font-size:6.4px;color:#222">Informasi Tentang Covid-19 Terkini</div>
 <div class="t b" style="left:18.5px;top:26px;font-size:4.6px;color:#222">Lawan Covid Jangan Panik</div>
 <div class="t" style="left:18.5px;top:35px;font-size:3px;color:#555">Situs ini mengolah data untuk memantau penyebaran <b>virus corona</b></div>
 <div class="t" style="left:18.5px;top:39px;font-size:3px;color:#555">secara <b>di Indonesia</b>, kasus di dataset saat ini diperbarui oleh dan</div>
 <div class="t" style="left:18.5px;top:43px;font-size:3px;color:#555">penyelenggara.</div>
 <div class="t b" style="left:18.5px;top:57px;font-size:3.4px;color:#222">Jumlah kasus di Indonesia saat ini:</div>
 <div class="a" style="left:18.5px;top:62.5px;width:35.5px;height:23px;background:#2d3642;border-radius:1px"></div>
 <div class="a" style="left:61px;top:62.5px;width:35.5px;height:23px;background:#2d3642;border-radius:1px"></div>
 <div class="a" style="left:104px;top:62.5px;width:35.5px;height:23px;background:#2d3642;border-radius:1px"></div>
 <div class="a" style="left:147px;top:62.5px;width:35.5px;height:23px;background:#2d3642;border-radius:1px"></div>
 <div class="t c" style="left:36px;top:72.5px;font-size:7.6px;color:#d8d030">4066404</div>
 <div class="t c" style="left:79px;top:72.5px;font-size:7.6px;color:#c8963a">3935032</div>
 <div class="t c" style="left:122px;top:72.5px;font-size:7.6px;color:#3a8a3a">0</div>
 <div class="t c" style="left:165px;top:72.5px;font-size:7.6px;color:#a8303a">133372</div>
 <div class="t c" style="left:36px;top:81px;font-size:2.4px;color:#ccc">Total Kumulatif</div><div class="t c" style="left:79px;top:81px;font-size:2.4px;color:#ccc">Pulang Sembuh</div><div class="t c" style="left:122px;top:81px;font-size:2.4px;color:#ccc">Dirawat</div><div class="t c" style="left:165px;top:81px;font-size:2.4px;color:#ccc">Meninggal</div>
 <svg style="left:120px;top:14px" width="66" height="48" viewBox="0 0 66 48"><circle cx="42" cy="18" r="16" fill="#e4f4f6"/><g fill="#8cb65a"><circle cx="8" cy="11" r="5"/><circle cx="17" cy="20" r="6"/><circle cx="22" cy="8" r="3"/><circle cx="6" cy="26" r="2"/><circle cx="15" cy="36" r="6"/></g><path d="M21 12l12-3 10 4c0 12-2 20-11 25-9-5-11-13-11-26z" fill="#b52a5a"/><path d="M30 18h4v4h4v4h-4v4h-4v-4h-4v-4h4z" fill="#fff"/><circle cx="40" cy="14" r="4" fill="#e8b090"/><path d="M36 8c3-3 8-2 8 2l-5 2z" fill="#b03a4a"/><path d="M38 20c6-3 14 0 15 7l2 15H38z" fill="#5048a0"/><path d="M56 2l3 1-6 22-3-1z" fill="#8a9aa8"/></svg>
 <div class="t c b" style="left:100.5px;top:112.5px;color:#e11a1a;font-family:'DejaVu Sans','Liberation Sans',sans-serif;font-size:15.4px">PANTAU COVID</div>
</div>
<div class="t" style="left:1310.5px;top:380.5px;font-size:4.8px;color:#ddd">Lorem Ipsum dolor sit amet direction, of the bird of the atlantic, I used the 100 percent</div>
<div class="t" style="left:1310.5px;top:386px;font-size:4.8px;color:#ddd">brain power to get explore the universe</div>
<div class="t b" style="left:1310.5px;top:409px;font-size:8.9px;color:#eee">Responsibilities</div>
<div class="t" style="left:1310.5px;top:422px;font-size:4.8px;color:#ddd">It is a long established fact that a reader will be distracted by the readable content of a page</div>
<div class="t" style="left:1310.5px;top:427.5px;font-size:4.8px;color:#ddd">when looking at its layout. The point of using Lorem Ipsum is that it has a more-or-less norma</div>
<div class="t" style="left:1310.5px;top:433px;font-size:4.8px;color:#ddd">distribution of letters, as opposed to using 'Content here, content here', making it look like</div>
<div class="t" style="left:1310.5px;top:438.5px;font-size:4.8px;color:#ddd">readable English. Many desktop publishing packages and web page editors now use Lorem</div>
<div class="t" style="left:1310.5px;top:444.2px;font-size:4.8px;color:#ddd">Ipsum as their default model text, and a search for 'lorem ipsum' will uncover many web sites</div>
<div class="t" style="left:1310.5px;top:450px;font-size:4.8px;color:#ddd">still in their infancy. Various versions have evolved over the years, sometimes by accident,</div>
<div class="t" style="left:1310.5px;top:455.5px;font-size:4.8px;color:#ddd">sometimes on purpose (injected humour and the like).</div>
<div class="t b" style="left:1310.5px;top:471px;font-size:8.9px;color:#eee">Technology</div>
<div class="t b" style="left:1310.5px;top:507px;font-size:8.9px;color:#eee">Screenshot</div>
<svg style="left:418px;top:0" width="1800" height="854" viewBox="0 0 1800 854"><use href="#lap"/></svg>
<div class="t ft" style="left:1391px;top:676.5px;font-size:4.9px;color:#eee">Home page</div>
<div class="t ft" style="left:1391px;top:690.3px;font-size:4.9px;color:#eee">Blog</div>
<div class="t ft" style="left:1391px;top:704px;font-size:4.9px;color:#eee">About</div>
<div class="t ft" style="left:1391px;top:717.7px;font-size:4.9px;color:#eee">Contact</div>
<div class="a" style="left:1308.5px;top:682.5px;width:25px;height:25px;border-radius:50%;background:#fff"></div>
<div class="t" style="left:1321px;top:694.5px;font:italic 700 6.5px 'Liberation Serif',serif;color:#000;transform:translate(-50%,-50%) rotate(-12deg)">TheDK</div>
<div class="t c" style="left:1321px;top:716px;font-size:3.8px;color:#ddd">A man with enthusiasmic</div>
<div class="t c" style="left:1321px;top:720.5px;font-size:3.8px;color:#ddd">about technology</div>
<div class="t c" style="left:1454px;top:796px;font-size:3.2px;color:#4a4a4a">Images is from Unsplash</div>
<div class="t ft" style="left:1378px;top:804px;font-size:4.8px;color:#eee">Designed with</div>
<svg style="left:1411.5px;top:801.5px" width="5" height="7" viewBox="0 0 5 7"><rect width="5" height="3" fill="#3aa0e8" rx="1"/><rect y="3" width="3" height="4" fill="#1a6ab0"/></svg>
<div class="t ft" style="left:1419px;top:804px;font-size:4.8px;color:#eee">Developed with</div>
<div class="t ft" style="left:1455px;top:804px;font-size:3.6px;color:#555;letter-spacing:.8px">NEXT</div>
<div class="t ft" style="left:1472px;top:804px;font-size:4.8px;color:#eee">Deployed with</div>
<div class="t ft" style="left:1506px;top:804px;font-size:3.6px;color:#ddd">▲Vercel</div>
</div>

<!-- scrollbars -->
<div class="a" style="left:1504.5px;top:57px;width:7px;height:635px;border-radius:3.5px;background:rgba(96,96,96,.47);border:1px solid rgba(255,255,255,.32)"></div>
<div class="a" style="left:286px;top:840px;width:687px;height:7px;border-radius:3.5px;background:rgba(96,96,96,.47);border-top:.7px solid rgba(255,255,255,.35);border-bottom:.7px solid rgba(255,255,255,.35)"></div>

<!-- bottom strip -->
<div class="a" style="left:0;top:851px;width:1800px;height:3px;background:#000"></div>

<!-- left panel -->
<div class="a" style="left:0;top:52px;width:279px;height:799px;background:#fff;filter:blur(.25px)">
 <div class="a" style="left:0;top:46.5px;width:279px;height:1px;background:#e8e8e8"></div>
 <div class="a" style="left:0;top:182px;width:279px;height:1px;background:#e5e5e5"></div>
</div>
<div style="filter:blur(.25px)">
<div class="t ui b" style="left:16px;top:74px">Layers</div>
<div class="t ui" style="left:76px;top:74px;color:#b5b5b5;letter-spacing:.35px">Assets</div>
<div class="t ui" style="left:217px;top:74px">Main</div>
<svg style="left:251px;top:72px" width="9" height="5" viewBox="0 0 9 5"><path d="M1 4l3.5-3L8 4" fill="none" stroke="#b8b8b8" stroke-width="1.2"/></svg>
<div class="t ui b" style="left:16px;top:121px">Pages</div>
<svg style="left:244px;top:115px" width="14" height="14" viewBox="0 0 14 14"><path d="M7 0v14M0 7h14" stroke="#444" stroke-width="1.1"/></svg>
<svg style="left:20px;top:154px" width="11" height="10" viewBox="0 0 11 10"><path d="M1 5.2l3 3L10 1.4" fill="none" stroke="#111" stroke-width="1.7"/></svg>
<div class="t ui" style="left:44.5px;top:159px">Main</div>
<div class="t ui" style="left:44.5px;top:196.5px">Components</div>
<svg style="left:18.5px;top:247px" width="14" height="13" viewBox="0 0 14 13"><path d="M.7 3V.8h12.6V3M7 .8v11.5M4.7 12.4h4.6" fill="none" stroke="#bdbdbd" stroke-width="1.2"/></svg>
<div class="t ui" style="left:44.5px;top:253px;letter-spacing:.37px">Blog idea How i build this website ...</div>
<svg style="left:19.5px;top:287px" width="12" height="8" viewBox="0 0 12 8"><rect x=".6" y=".6" width="10.8" height="6.8" fill="none" stroke="#bdbdbd" stroke-width="1.1"/></svg>
<div class="t ui" style="left:44.5px;top:290.5px">Rectangle 25</div>
<svg style="left:19.5px;top:321px" width="13" height="14" viewBox="0 0 13 14"><path d="M3.5 0v14M9.5 0v14M0 3.5h13M0 10h13" stroke="#444" stroke-width="1.3" fill="none"/></svg>
<svg style="left:47px;top:322px" width="13" height="13" viewBox="0 0 13 13"><rect x=".7" y=".7" width="11" height="11" rx="2.5" fill="none" stroke="#333" stroke-width="1.2"/><path d="M1 7.5h10.5" stroke="#333" stroke-width="1.2"/></svg>
<div class="t ui b" style="left:72.5px;top:328px">Homepage</div>
<svg style="left:19.5px;top:359px" width="13" height="14" viewBox="0 0 13 14"><path d="M3.5 0v14M9.5 0v14M0 3.5h13M0 10h13" stroke="#444" stroke-width="1.3" fill="none"/></svg>
<div class="t ui b" style="left:44.5px;top:365.5px">Projects Page</div>
<svg style="left:19.5px;top:396.5px" width="13" height="14" viewBox="0 0 13 14"><path d="M3.5 0v14M9.5 0v14M0 3.5h13M0 10h13" stroke="#444" stroke-width="1.3" fill="none"/></svg>
<div class="t ui b" style="left:44.5px;top:403px">Project Detail Page</div>
<svg style="left:19.5px;top:434px" width="13" height="14" viewBox="0 0 13 14"><path d="M3.5 0v14M9.5 0v14M0 3.5h13M0 10h13" stroke="#444" stroke-width="1.3" fill="none"/></svg>
<div class="t ui b" style="left:44.5px;top:441px">Blogs Page</div>
<svg style="left:19.5px;top:471.5px" width="13" height="14" viewBox="0 0 13 14"><path d="M3.5 0v14M9.5 0v14M0 3.5h13M0 10h13" stroke="#444" stroke-width="1.3" fill="none"/></svg>
<div class="t ui b" style="left:44.5px;top:478px">Blog Detail Page</div>
</div>

<!-- right panel -->
<div class="a" style="left:1519px;top:52px;width:281px;height:799px;background:#fff"></div>
<div style="filter:blur(.25px)">
<div class="a" style="left:1519px;top:98.5px;width:281px;height:1px;background:#e8e8e8"></div>
<div class="a" style="left:1519px;top:194.5px;width:281px;height:1px;background:#e8e8e8"></div>
<div class="a" style="left:1519px;top:252.5px;width:281px;height:1px;background:#e8e8e8"></div>
<div class="t ui b" style="left:1538px;top:74px">Design</div>
<div class="t ui" style="left:1600px;top:74px;color:#b5b5b5;letter-spacing:.45px">Prototype</div>
<div class="t ui" style="left:1679px;top:74px;color:#b5b5b5;letter-spacing:.35px">Inspect</div>
<div class="t ui b" style="left:1538px;top:127px">Background</div>
<div class="a" style="left:1538px;top:156px;width:19px;height:19px;background:#e3e3e3"></div>
<div class="t ui" style="left:1566px;top:165px;letter-spacing:.05px">E5E5E5</div>
<div class="t ui" style="left:1652px;top:165px">100%</div>
<svg style="left:1765px;top:160px" width="15" height="11" viewBox="0 0 15 11"><path d="M.7 5.5C3 1.6 5 .8 7.500.8s4.500.8 6.800 4.700C12 9.400 10 10.200 7.500 10.200S3 9.400.7 5.500z" fill="none" stroke="#222" stroke-width="1.2"/><circle cx="7.5" cy="5.5" r="2.3" fill="#222"/></svg>
<div class="t ui b" style="left:1538px;top:222.5px;color:#b5b5b5">Export</div>
<svg style="left:1766px;top:216px" width="13" height="13" viewBox="0 0 13 13"><path d="M6.5 0v13M0 6.500h13" stroke="#bdbdbd" stroke-width="1.1"/></svg>
</div>

<!-- help -->
<div class="a" style="left:1730px;top:782px;width:42px;height:42px;border-radius:50%;background:#2c2c2c"></div>
<div class="t c" style="left:1751px;top:803px;font-size:21px;color:#eee">?</div>

<!-- toolbar -->
<div class="a" style="left:0;top:0;width:1800px;height:51px;background:#2c2c2c"></div>
<div class="a" style="left:0;top:51px;width:279px;height:1px;background:#e5e5e5"></div>
<div class="a" style="left:1519px;top:51px;width:281px;height:1px;background:#e5e5e5"></div>
<div class="a" style="left:279px;top:51px;width:1240px;height:1.2px;background:#f2f2f2"></div>
<div class="a" style="left:56px;top:0;width:57px;height:51px;background:#18a0fb"></div>
<div style="filter:blur(.25px)">
<svg style="left:12px;top:13px" width="16" height="21" viewBox="0 0 16 21" fill="none" stroke="#e6e6e6" stroke-width="1.5"><path d="M8 1H4.500a3.200 3.200 0 000 6.500H8zM8 1h3.500a3.200 3.200 0 010 6.500H8zM8 7.500H4.500a3.200 3.200 0 000 6.500H8z"/><circle cx="11.5" cy="10.8" r="3.2"/><path d="M8 14H4.500a3.200 3.200 0 103.500 3.200z"/></svg>
<svg style="left:35px;top:20px" width="9" height="6" viewBox="0 0 9 6"><path d="M1 1l3.500 3.500L8 1" fill="none" stroke="#bbb" stroke-width="1.3"/></svg>
<svg style="left:73px;top:15px" width="18" height="18" viewBox="0 0 18 18"><path d="M1.500 1.500l15 6-6.500 2-2.500 7z" fill="none" stroke="#fff" stroke-width="1.4" stroke-linejoin="round"/></svg>
<svg style="left:98px;top:20px" width="9" height="6" viewBox="0 0 9 6"><path d="M1 1l3.500 3.500L8 1" fill="none" stroke="#fff" stroke-width="1.3"/></svg>
<svg style="left:129px;top:14px" width="20" height="20" viewBox="0 0 20 20"><path d="M4 0v20M16 0v20M0 4h20M0 16h20" stroke="#c4c4c4" stroke-width="1.5"/></svg>
<svg style="left:155px;top:20px" width="9" height="6" viewBox="0 0 9 6"><path d="M1 1l3.500 3.500L8 1" fill="none" stroke="#bbb" stroke-width="1.3"/></svg>
<svg style="left:184px;top:14px" width="20" height="19" viewBox="0 0 20 19"><rect x=".8" y=".8" width="18.4" height="17.4" fill="none" stroke="#b8b8b8" stroke-width="1.6"/></svg>
<svg style="left:211px;top:20px" width="9" height="6" viewBox="0 0 9 6"><path d="M1 1l3.500 3.500L8 1" fill="none" stroke="#bbb" stroke-width="1.3"/></svg>
<svg style="left:240px;top:14px" width="20" height="19" viewBox="0 0 20 19" fill="none" stroke="#c4c4c4" stroke-width="1.4"><path d="M1 1l11 2.500 4 6.500-5 4.500-6.500-3.500zM1 1l6.500 7"/><circle cx="8.5" cy="9" r="1.3" fill="#c4c4c4" stroke="none"/><path d="M11.500 14.800l2.800 3 4.700-4.500-3-3.200"/></svg>
<svg style="left:267px;top:20px" width="9" height="6" viewBox="0 0 9 6"><path d="M1 1l3.500 3.500L8 1" fill="none" stroke="#bbb" stroke-width="1.3"/></svg>
<svg style="left:296px;top:14px" width="17" height="20" viewBox="0 0 17 20"><path d="M.8 4.500V.8h15.400v3.700M8.500.8v18M5 18.800h7" fill="none" stroke="#c8c8c8" stroke-width="1.4"/></svg>
<svg style="left:342px;top:12px" width="22" height="24" viewBox="0 0 22 24"><path d="M6 12V5.500c0-2 2.500-2 2.500 0V11M8.500 10V2.500c0-2 3-2 3 0V10M11.500 10V3c0-2 3-2 3 0v8M14.500 10.500V5.500c0-2 3-2 3 0V17c0 4-3 6-6.500 6-3 0-4.500-1-6-3.500L1.500 14c-1.200-1.800 1-3.200 2.300-1.800L6 15" fill="none" stroke="#c8c8c8" stroke-width="1.3" stroke-linejoin="round"/></svg>
<svg style="left:388px;top:14px" width="22" height="20" viewBox="0 0 22 20"><path d="M1 19h9a9 9 0 10-7.500-4z" fill="none" stroke="#c8c8c8" stroke-width="1.4" stroke-linejoin="round"/></svg>
<svg style="left:384px;top:0" width="15" height="12" viewBox="0 0 15 12"><path d="M0-3l0 13 3.500-3 3 5.500 3-1.500L7 6h5z" fill="#111" stroke="#fff" stroke-width="1.2"/></svg>

<svg style="left:808px;top:9px" width="29" height="29" viewBox="0 0 29 29" fill="none" stroke="#8a8a8a" stroke-width="1.2"><circle cx="14.5" cy="14.5" r="13.5"/><circle cx="14.5" cy="12" r="5.5"/><path d="M5.500 24c2-3.500 5-5 9-5s7 1.500 9 5"/></svg>
<div class="t" style="left:850px;top:23px;font-size:17px;color:#8d8d8d">Drafts</div>
<div class="t" style="left:905px;top:24px;font-size:18px;color:#777">/</div>
<div class="t" style="left:919.5px;top:23px;font-size:17px;color:#f2f2f2">Dicka Ismaji</div>
<svg style="left:1021px;top:21px" width="9" height="6" viewBox="0 0 9 6"><path d="M1 1l3.500 3.500L8 1" fill="none" stroke="#ddd" stroke-width="1.5"/></svg>

<div class="a" style="left:1555px;top:9px;width:28px;height:28px;border-radius:50%;background:#fff"></div>
<div class="t" style="left:1569px;top:23.5px;font:italic 700 7.5px 'Liberation Serif',serif;color:#000;transform:translate(-50%,-50%) rotate(-12deg)">TheDK</div>
<div class="a" style="left:1600px;top:5px;width:64px;height:37px;background:#18a0fb;border-radius:6px"></div>
<div class="t c" style="left:1632px;top:21.5px;font-size:13.4px;color:#fff;font-weight:700">Share</div>
<svg style="left:1693px;top:17px" width="13" height="15" viewBox="0 0 13 15"><path d="M1.500 1l10 6.500-10 6.500z" fill="none" stroke="#c4c4c4" stroke-width="1.4" stroke-linejoin="round"/></svg>
<div class="t" style="left:1743px;top:23px;font-size:13.2px;color:#c8c8c8">23%</div>
<svg style="left:1776px;top:21px" width="9" height="6" viewBox="0 0 9 6"><path d="M1 1l3.500 3.500L8 1" fill="none" stroke="#bbb" stroke-width="1.3"/></svg>
</div>
</body></html>
